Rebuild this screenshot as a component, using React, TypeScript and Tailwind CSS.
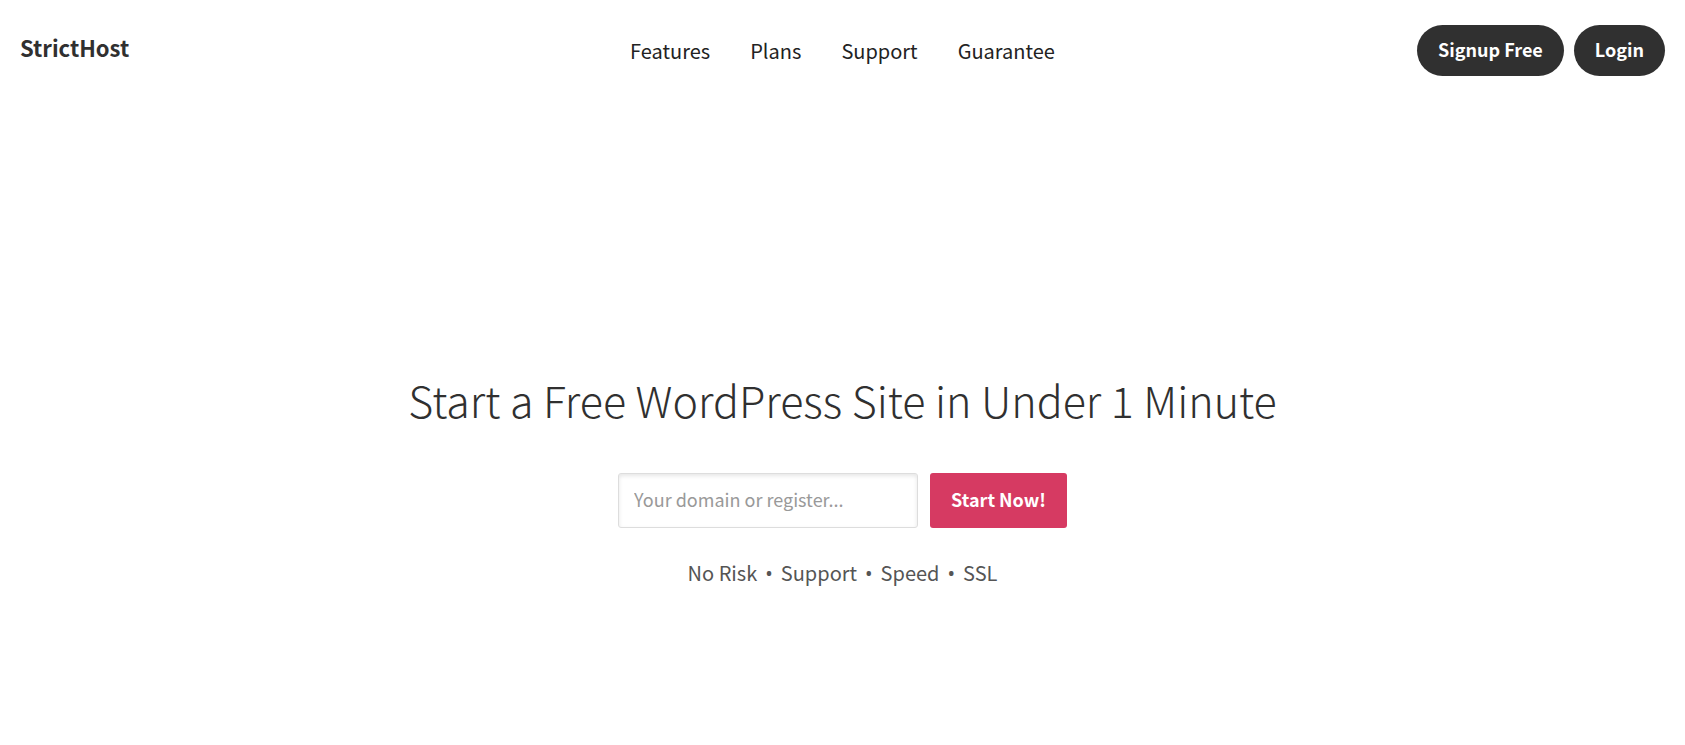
import { FormEvent, useState } from 'react'

const navLinks = [
  { label: 'Features', href: '#features' },
  { label: 'Plans', href: '#plans' },
  { label: 'Support', href: '#support' },
  { label: 'Guarantee', href: '#guarantee' },
]

const perks = ['No Risk', 'Support', 'Speed', 'SSL']

function Header() {
  return (
    <header className="grid grid-cols-[1fr_auto_1fr] items-center px-5 pt-[25px]">
      <a href="#home" className="justify-self-start pb-1.5 text-[22px] font-bold text-[#303030]">
        StrictHost
      </a>
      <nav className="flex gap-10 text-xl text-[#222]">
        {navLinks.map(link => (
          <a key={link.href} href={link.href} className="hover:underline">
            {link.label}
          </a>
        ))}
      </nav>
      <div className="flex gap-2.5 justify-self-end text-lg font-bold text-white">
        <button type="button" className="h-[51px] rounded-full bg-[#303030] px-[21px] pb-1 hover:bg-black">
          Signup Free
        </button>
        <button type="button" className="h-[51px] rounded-full bg-[#303030] px-[21px] pb-1 hover:bg-black">
          Login
        </button>
      </div>
    </header>
  )
}

function SignupForm() {
  const [domain, setDomain] = useState('')

  function handleSubmit(event: FormEvent<HTMLFormElement>) {
    event.preventDefault()
  }

  return (
    <form onSubmit={handleSubmit} className="mt-10 flex flex-wrap justify-center gap-3 text-lg">
      <input
        type="text"
        aria-label="Your domain"
        value={domain}
        onChange={event => setDomain(event.target.value)}
        placeholder="Your domain or register..."
        className="h-[55px] w-[300px] rounded-[3px] border border-[#ddd] px-[15px] pb-1 text-[#303030] shadow-[inset_0_2px_4px_rgba(0,0,0,0.1)] placeholder:text-[#999] focus:outline-none"
      />
      <button type="submit" className="h-[55px] rounded-[3px] bg-[#d63a62] px-[21px] pb-1 font-bold text-white hover:bg-[#c23056]">
        Start Now!
      </button>
    </form>
  )
}

export default function App() {
  return (
    <div className="min-h-screen bg-white font-['Noto_Sans_CJK_SC',sans-serif]">
      <Header />
      <main className="px-5 pt-[289px] pb-10 text-center">
        <h1 className="text-[43px] leading-[68px] font-light text-[#303030]">Start a Free WordPress Site in Under 1 Minute</h1>
        <SignupForm />
        <ul className="mt-[31px] flex justify-center text-xl text-[#555]">
          {perks.map((perk, index) => (
            <li key={perk}>
              {index > 0 ? <span className="px-2 font-['Noto_Sans',sans-serif]">•</span> : null}
              {perk}
            </li>
          ))}
        </ul>
      </main>
    </div>
  )
}
